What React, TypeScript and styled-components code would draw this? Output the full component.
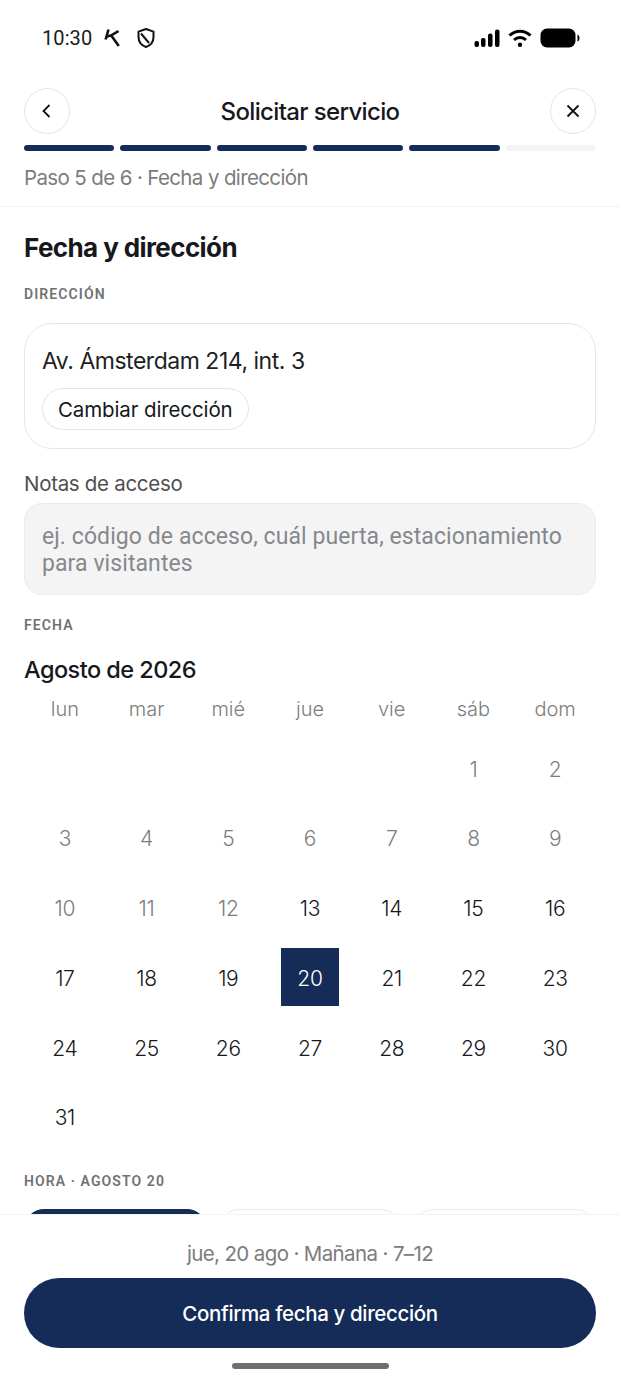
import React from "react";
import styled, { createGlobalStyle } from "styled-components";

const NAVY = "#142c57";

const GlobalStyle = createGlobalStyle`
  html, body {
    margin: 0;
    padding: 0;
    background: #ffffff;
  }
  * {
    box-sizing: border-box;
  }
`;

const firstRows: (number | null)[] = [null, null, null, null, null, 1, 2];
const weekDays = ["lun", "mar", "mié", "jue", "vie", "sáb", "dom"];
const days: (number | null)[] = [
  ...firstRows,
  ...Array.from({ length: 29 }, (_, i) => i + 3),
];

const App: React.FC = () => {
  return (
    <Screen>
      <GlobalStyle />
      <StatusBar>
        <StatusLeft>
          <Clock>10:30</Clock>
          <svg width="18" height="20" viewBox="0 0 18 20" fill="none">
            <path
              d="M5.5 1.5 L2.6 11.5 M3 9 C7 8 11.5 6 15.5 3 M7.5 6.5 L15.8 18"
              stroke="#111"
              strokeWidth="2.6"
            />
          </svg>
          <ShieldIcon width="20" height="22" viewBox="0 0 20 22" fill="none">
            <path
              d="M10 2 L17.5 4.6 V10 C17.5 15 14.5 18.3 10 20 C5.5 18.3 2.5 15 2.5 10 V4.6 Z"
              stroke="#111"
              strokeWidth="2"
              strokeLinejoin="round"
            />
            <path d="M5 6.5 L13 16" stroke="#111" strokeWidth="2" />
          </ShieldIcon>
        </StatusLeft>
        <StatusRight>
          <svg width="26" height="18" viewBox="0 0 26 18">
            <rect x="0.5" y="12" width="4.5" height="6" rx="2" fill="#000" />
            <rect x="7" y="9" width="4.5" height="9" rx="2" fill="#000" />
            <rect x="14" y="4.5" width="4.5" height="13.5" rx="2" fill="#000" />
            <rect x="21" y="0.5" width="4.5" height="17.5" rx="2" fill="#000" />
          </svg>
          <svg width="24" height="18" viewBox="0 0 24 18" fill="none">
            <path d="M1.5 6.5 C7.5 0.8 16.5 0.8 22.5 6.5" stroke="#000" strokeWidth="3" />
            <path d="M6 11 C9.5 7.8 14.5 7.8 18 11" stroke="#000" strokeWidth="3" />
            <circle cx="12" cy="15.8" r="2.2" fill="#000" />
          </svg>
          <svg width="40" height="20" viewBox="0 0 40 20">
            <rect x="0.5" y="0.5" width="35" height="19" rx="6.5" fill="#000" />
            <path d="M37.5 6.5 C39 7 39.5 8.5 39.5 10 C39.5 11.5 39 13 37.5 13.5 Z" fill="#000" />
          </svg>
        </StatusRight>
      </StatusBar>

      <Header>
        <TitleRow>
          <RoundButton aria-label="Atrás">
            <svg width="18" height="18" viewBox="0 0 18 18" fill="none">
              <path d="M11.5 3 L5.5 9 L11.5 15" stroke="#111" strokeWidth="1.8" />
            </svg>
          </RoundButton>
          <Title>Solicitar servicio</Title>
          <RoundButton aria-label="Cerrar">
            <svg width="18" height="18" viewBox="0 0 18 18" fill="none">
              <path d="M3.5 3.5 L14.5 14.5 M14.5 3.5 L3.5 14.5" stroke="#111" strokeWidth="1.8" />
            </svg>
          </RoundButton>
        </TitleRow>
        <Progress>
          {[1, 2, 3, 4, 5, 6].map((step) => (
            <ProgressStep key={step} $done={step <= 5} />
          ))}
        </Progress>
        <StepText>Paso 5 de 6 · Fecha y dirección</StepText>
      </Header>

      <Content>
        <Heading>Fecha y dirección</Heading>
        <SectionLabel>DIRECCIÓN</SectionLabel>
        <AddressCard>
          <AddressText>Av. Ámsterdam 214, int. 3</AddressText>
          <ChangeButton>Cambiar dirección</ChangeButton>
        </AddressCard>
        <NotesLabel>Notas de acceso</NotesLabel>
        <NotesBox>
          ej. código de acceso, cuál puerta, estacionamiento para visitantes
        </NotesBox>
        <DateLabel>FECHA</DateLabel>
        <MonthTitle>Agosto de 2026</MonthTitle>
        <WeekRow>
          {weekDays.map((d) => (
            <WeekDay key={d}>{d}</WeekDay>
          ))}
        </WeekRow>
        <DaysGrid>
          {days.map((day, i) => (
            <DayCell key={i}>
              {day !== null ? (
                <Day $past={day < 13} $selected={day === 20}>
                  {day}
                </Day>
              ) : null}
            </DayCell>
          ))}
        </DaysGrid>
        <TimeLabel>HORA · AGOSTO 20</TimeLabel>
        <TimeRow>
          <TimeChip $active />
          <TimeChip />
          <TimeChip />
        </TimeRow>
      </Content>

      <Footer>
        <Summary>jue, 20 ago · Mañana · 7–12</Summary>
        <ConfirmButton>Confirma fecha y dirección</ConfirmButton>
        <HomeBar />
      </Footer>
    </Screen>
  );
};

const Screen = styled.div`
  width: 620px;
  height: 1383px;
  display: flex;
  flex-direction: column;
  overflow: hidden;
  background: #ffffff;
  color: #16181c;
  font-family: "Inter", "Liberation Sans", sans-serif;
`;
const StatusBar = styled.div`
  height: 76px;
  flex: none;
  display: flex;
  align-items: center;
  justify-content: space-between;
  padding: 0 40px 0 42px;
`;
const StatusLeft = styled.div`
  display: flex;
  align-items: center;
  gap: 11px;
`;
const StatusRight = styled.div`
  display: flex;
  align-items: center;
  gap: 8px;
`;
const Clock = styled.span`
  font-family: "Roboto", sans-serif;
  font-size: 20px;
  letter-spacing: 0.1px;
  color: #1a1a1a;
`;
const ShieldIcon = styled.svg`
  margin-left: 4px;
`;
const Header = styled.div`
  flex: none;
  height: 131px;
  padding: 12px 24px 0;
  border-bottom: 1px solid #f3f3f3;
`;
const TitleRow = styled.div`
  display: flex;
  align-items: center;
  justify-content: space-between;
`;
const RoundButton = styled.div`
  width: 46px;
  height: 46px;
  border-radius: 50%;
  border: 1px solid #e4e4e4;
  display: flex;
  align-items: center;
  justify-content: center;
`;
const Title = styled.div`
  font-size: 24px;
  font-weight: 500;
  letter-spacing: -0.65px;
  color: #16181c;
`;
const Progress = styled.div`
  display: flex;
  gap: 6px;
  margin-top: 11px;
`;
const ProgressStep = styled.div<{ $done: boolean }>`
  flex: 1;
  height: 6px;
  border-radius: 3px;
  background: ${(p) => (p.$done ? NAVY : "#f4f4f4")};
`;
const StepText = styled.div`
  margin-top: 14px;
  font-size: 20.5px;
  line-height: 26px;
  letter-spacing: -0.63px;
  color: #7c7c7c;
`;
const Content = styled.div`
  flex: 1;
  min-height: 0;
  overflow: hidden;
  padding: 0 24px;
`;
const Heading = styled.h1`
  margin: 23px 0 0;
  font-size: 26px;
  line-height: 36px;
  font-weight: 700;
  letter-spacing: -0.6px;
  color: #16181c;
`;
const SectionLabel = styled.div`
  margin-top: 19px;
  font-family: "Roboto", sans-serif;
  font-size: 14px;
  line-height: 18px;
  font-weight: 600;
  letter-spacing: 1.1px;
  color: #717171;
`;
const AddressCard = styled.div`
  margin-top: 20px;
  height: 126px;
  border: 1px solid #e6e6e6;
  border-radius: 28px;
  padding: 21px 17px 0;
`;
const AddressText = styled.div`
  font-size: 23px;
  line-height: 32px;
  letter-spacing: -0.48px;
  color: #1d1f23;
`;
const ChangeButton = styled.div`
  display: inline-flex;
  align-items: center;
  height: 42px;
  margin-top: 11px;
  padding: 0 15px;
  border: 1px solid #e4e4e4;
  border-radius: 21px;
  font-size: 20.5px;
  letter-spacing: -0.12px;
  color: #16181c;
`;
const NotesLabel = styled.div`
  margin-top: 21px;
  font-size: 20.5px;
  line-height: 28px;
  letter-spacing: -0.3px;
  color: #4f4f4f;
`;
const NotesBox = styled.div`
  margin-top: 5px;
  height: 92px;
  padding: 19px 17px 0;
  background: #f4f4f4;
  border: 1px solid #ebebeb;
  border-radius: 18px;
  font-family: "Roboto", sans-serif;
  font-size: 23px;
  line-height: 27px;
  letter-spacing: 0.08px;
  color: #86888c;
`;
const DateLabel = styled(SectionLabel)`
  margin-top: 21px;
`;
const MonthTitle = styled.div`
  margin-top: 21px;
  font-size: 23.5px;
  line-height: 30px;
  font-weight: 500;
  letter-spacing: -0.55px;
  color: #16181c;
`;
const WeekRow = styled.div`
  margin-top: 11px;
  display: grid;
  grid-template-columns: repeat(7, 1fr);
`;
const WeekDay = styled.div`
  text-align: center;
  font-size: 20px;
  line-height: 26px;
  font-weight: 300;
  color: #7d7d7d;
`;
const DaysGrid = styled.div`
  margin-top: 17px;
  display: grid;
  grid-template-columns: repeat(7, 1fr);
  grid-auto-rows: 58px;
  row-gap: 11.8px;
`;
const DayCell = styled.div`
  display: flex;
  justify-content: center;
`;
const Day = styled.div<{ $past: boolean; $selected: boolean }>`
  width: 58px;
  height: 58px;
  padding-top: 2px;
  display: flex;
  align-items: center;
  justify-content: center;
  font-size: 21px;
  font-weight: ${(p) => (p.$past ? 300 : 350)};
  letter-spacing: -0.3px;
  color: ${(p) => (p.$selected ? "#ffffff" : p.$past ? "#7d7d7d" : "#16181c")};
  background: ${(p) => (p.$selected ? NAVY : "transparent")};
`;
const TimeLabel = styled(SectionLabel)`
  margin-top: 26px;
`;
const TimeRow = styled.div`
  margin-top: 19px;
  display: grid;
  grid-template-columns: repeat(3, 1fr);
  gap: 12px;
`;
const TimeChip = styled.div<{ $active?: boolean }>`
  height: 70px;
  border-radius: 20px;
  background: ${(p) => (p.$active ? NAVY : "#ffffff")};
  border: 1px solid ${(p) => (p.$active ? NAVY : "#ececec")};
`;
const Footer = styled.div`
  flex: none;
  height: 169px;
  padding: 0 24px;
  background: #ffffff;
  border-top: 1px solid #f3f3f3;
  display: flex;
  flex-direction: column;
  align-items: center;
`;
const Summary = styled.div`
  margin-top: 25px;
  font-size: 20.5px;
  line-height: 28px;
  letter-spacing: -0.63px;
  color: #7c7c7c;
`;
const ConfirmButton = styled.div`
  width: 100%;
  height: 70px;
  margin-top: 10px;
  border-radius: 35px;
  background: ${NAVY};
  color: #ffffff;
  display: flex;
  align-items: center;
  justify-content: center;
  font-size: 20.5px;
  font-weight: 500;
  letter-spacing: -0.37px;
`;
const HomeBar = styled.div`
  width: 157px;
  height: 6px;
  margin-top: 15px;
  border-radius: 3px;
  background: #6f6f6f;
`;

export default App;
